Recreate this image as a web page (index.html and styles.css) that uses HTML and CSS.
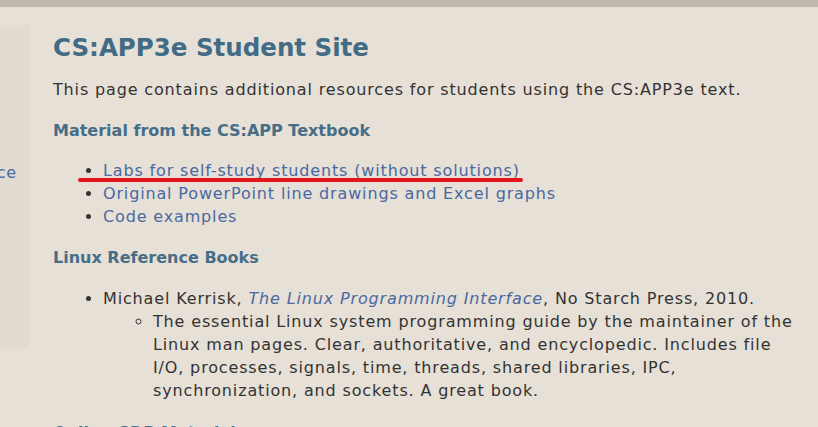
FILE: index.html
```html
<!DOCTYPE html>
<html>
<head>
<meta charset="utf-8">
<link rel="stylesheet" href="styles.css">
</head>
<body>
<div class="topbar"></div>
<div class="page">
  <aside class="sidebar">
    <div class="side-link"><a href="#">Reference</a></div>
  </aside>
  <main class="content">
    <h1>CS:APP3e Student Site</h1>
    <p class="intro">This page contains additional resources for students using the CS:APP3e text.</p>
    <h3>Material from the CS:APP Textbook</h3>
    <ul class="list">
      <li class="marked"><a href="#">Labs for self-study students (without solutions)</a><span class="redline"></span></li>
      <li><a href="#">Original PowerPoint line drawings and Excel graphs</a></li>
      <li><a href="#">Code examples</a></li>
    </ul>
    <h3 class="sec">Linux Reference Books</h3>
    <ul class="list books">
      <li>Michael Kerrisk, <a href="#"><em>The Linux Programming Interface</em></a>, No Starch Press, 2010.
        <ul class="sub">
          <li>The essential Linux system programming guide by the maintainer of the Linux man pages. Clear, authoritative, and encyclopedic. Includes file I/O, processes, signals, time, threads, shared libraries, IPC, synchronization, and sockets. A great book.</li>
        </ul>
      </li>
    </ul>
    <h3 class="sec last">Online GDB Materials</h3>
  </main>
</div>
</body>
</html>
```
FILE: styles.css
```css
html, body {
  margin: 0;
  padding: 0;
  background: #e6e0d6;
  height: 100%;
  overflow: hidden;
}
body {
  font-family: "DejaVu Sans", Verdana, sans-serif;
  font-size: 16px;
  letter-spacing: 0.85px;
  color: #333333;
}
a {
  color: #4a68a3;
  text-decoration: none;
}
.topbar {
  height: 7px;
  background: #c1b8ac;
}
.page {
  display: flex;
  align-items: flex-start;
}
.sidebar {
  width: 29px;
  height: 324px;
  margin-top: 18px;
  background: #e1dbd1;
  overflow: hidden;
  flex-shrink: 0;
}
.side-link {
  display: flex;
  justify-content: flex-end;
  padding-right: 12px;
  margin-top: 136px;
  white-space: nowrap;
  line-height: 23px;
}
.content {
  padding-left: 24px;
  padding-right: 22px;
  flex: 1;
}
h1 {
  font-size: 24.5px;
  letter-spacing: 0;
  font-weight: bold;
  color: #426b86;
  margin: 24px 0 0 0;
  line-height: 34px;
}
.intro {
  margin: 13px 0 0 0;
  line-height: 23px;
}
h3 {
  font-size: 16px;
  letter-spacing: 0;
  font-weight: bold;
  color: #466e88;
  margin: 18px 0 0 0;
  line-height: 23px;
}
h3.sec {
  margin-top: 18px;
}
h3.last {
  margin-top: 19px;
}
.list {
  margin: 17px 0 0 0;
  padding-left: 50px;
  line-height: 23px;
}
.list.books {
  margin-top: 18px;
}
.list li {
  position: relative;
}
.sub {
  margin: 0;
  padding-left: 50px;
  list-style-type: circle;
}
.redline {
  position: absolute;
  left: -25px;
  top: 19px;
  width: 445px;
  height: 4px;
  border-radius: 2px;
  background: #e3161c;
}
```
